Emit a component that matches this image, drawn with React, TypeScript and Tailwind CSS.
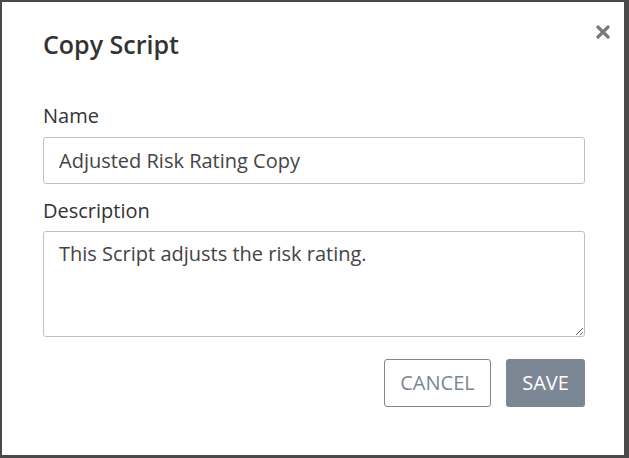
import { useState } from "react";

export default function App() {
  const [name, setName] = useState("Adjusted Risk Rating Copy");
  const [description, setDescription] = useState("This Script adjusts the risk rating.");

  return (
    <div
      className="w-[629px] h-[458px] bg-[#4a4a4a] pt-[2px] pl-[2px] overflow-hidden"
      style={{ fontFamily: '"Open Sans", "Liberation Sans", sans-serif' }}
    >
      <div
        role="dialog"
        aria-label="Copy Script"
        className="relative w-[622px] h-[453px] bg-white pl-[41px] pr-[39px] pt-[25px]"
      >
        <button
          type="button"
          aria-label="Close"
          className="absolute right-[13px] top-[22px] w-[16px] h-[16px] flex items-center justify-center text-[#7a7a7a]"
        >
          <svg width="14" height="14" viewBox="0 0 14 14">
            <path d="M2 2 L12 12 M12 2 L2 12" stroke="currentColor" strokeWidth="3.2" strokeLinecap="round" />
          </svg>
        </button>
        <h3 className="text-[25px] leading-[34px] font-semibold text-[#333]">Copy Script</h3>
        <form className="mt-[41px]" onSubmit={(e) => e.preventDefault()}>
          <label className="block text-[20px] leading-[28px] text-[#333]">
            Name
            <input
              value={name}
              onChange={(e) => setName(e.target.value)}
              className="block w-full mt-[7px] h-[47px] px-[15px] border border-[#bcc3c8] rounded-[3px] text-[20px] text-[#444] outline-none"
            />
          </label>
          <label className="block mt-[13px] text-[20px] leading-[28px] text-[#333]">
            Description
            <textarea
              value={description}
              onChange={(e) => setDescription(e.target.value)}
              className="block w-full mt-[6px] h-[106px] px-[15px] py-[8px] border border-[#bcc3c8] rounded-[3px] text-[20px] leading-[28px] text-[#444] outline-none resize-y"
            />
          </label>
          <div className="flex justify-end gap-[15px] mt-[22px]">
            <button
              type="button"
              className="h-[48px] w-[107px] border border-[#7b8794] rounded-[3px] text-[20px] text-[#7b8794]"
            >
              CANCEL
            </button>
            <button
              type="submit"
              className="h-[48px] w-[79px] bg-[#7b8794] rounded-[3px] text-[20px] text-white"
            >
              SAVE
            </button>
          </div>
        </form>
      </div>
    </div>
  );
}
